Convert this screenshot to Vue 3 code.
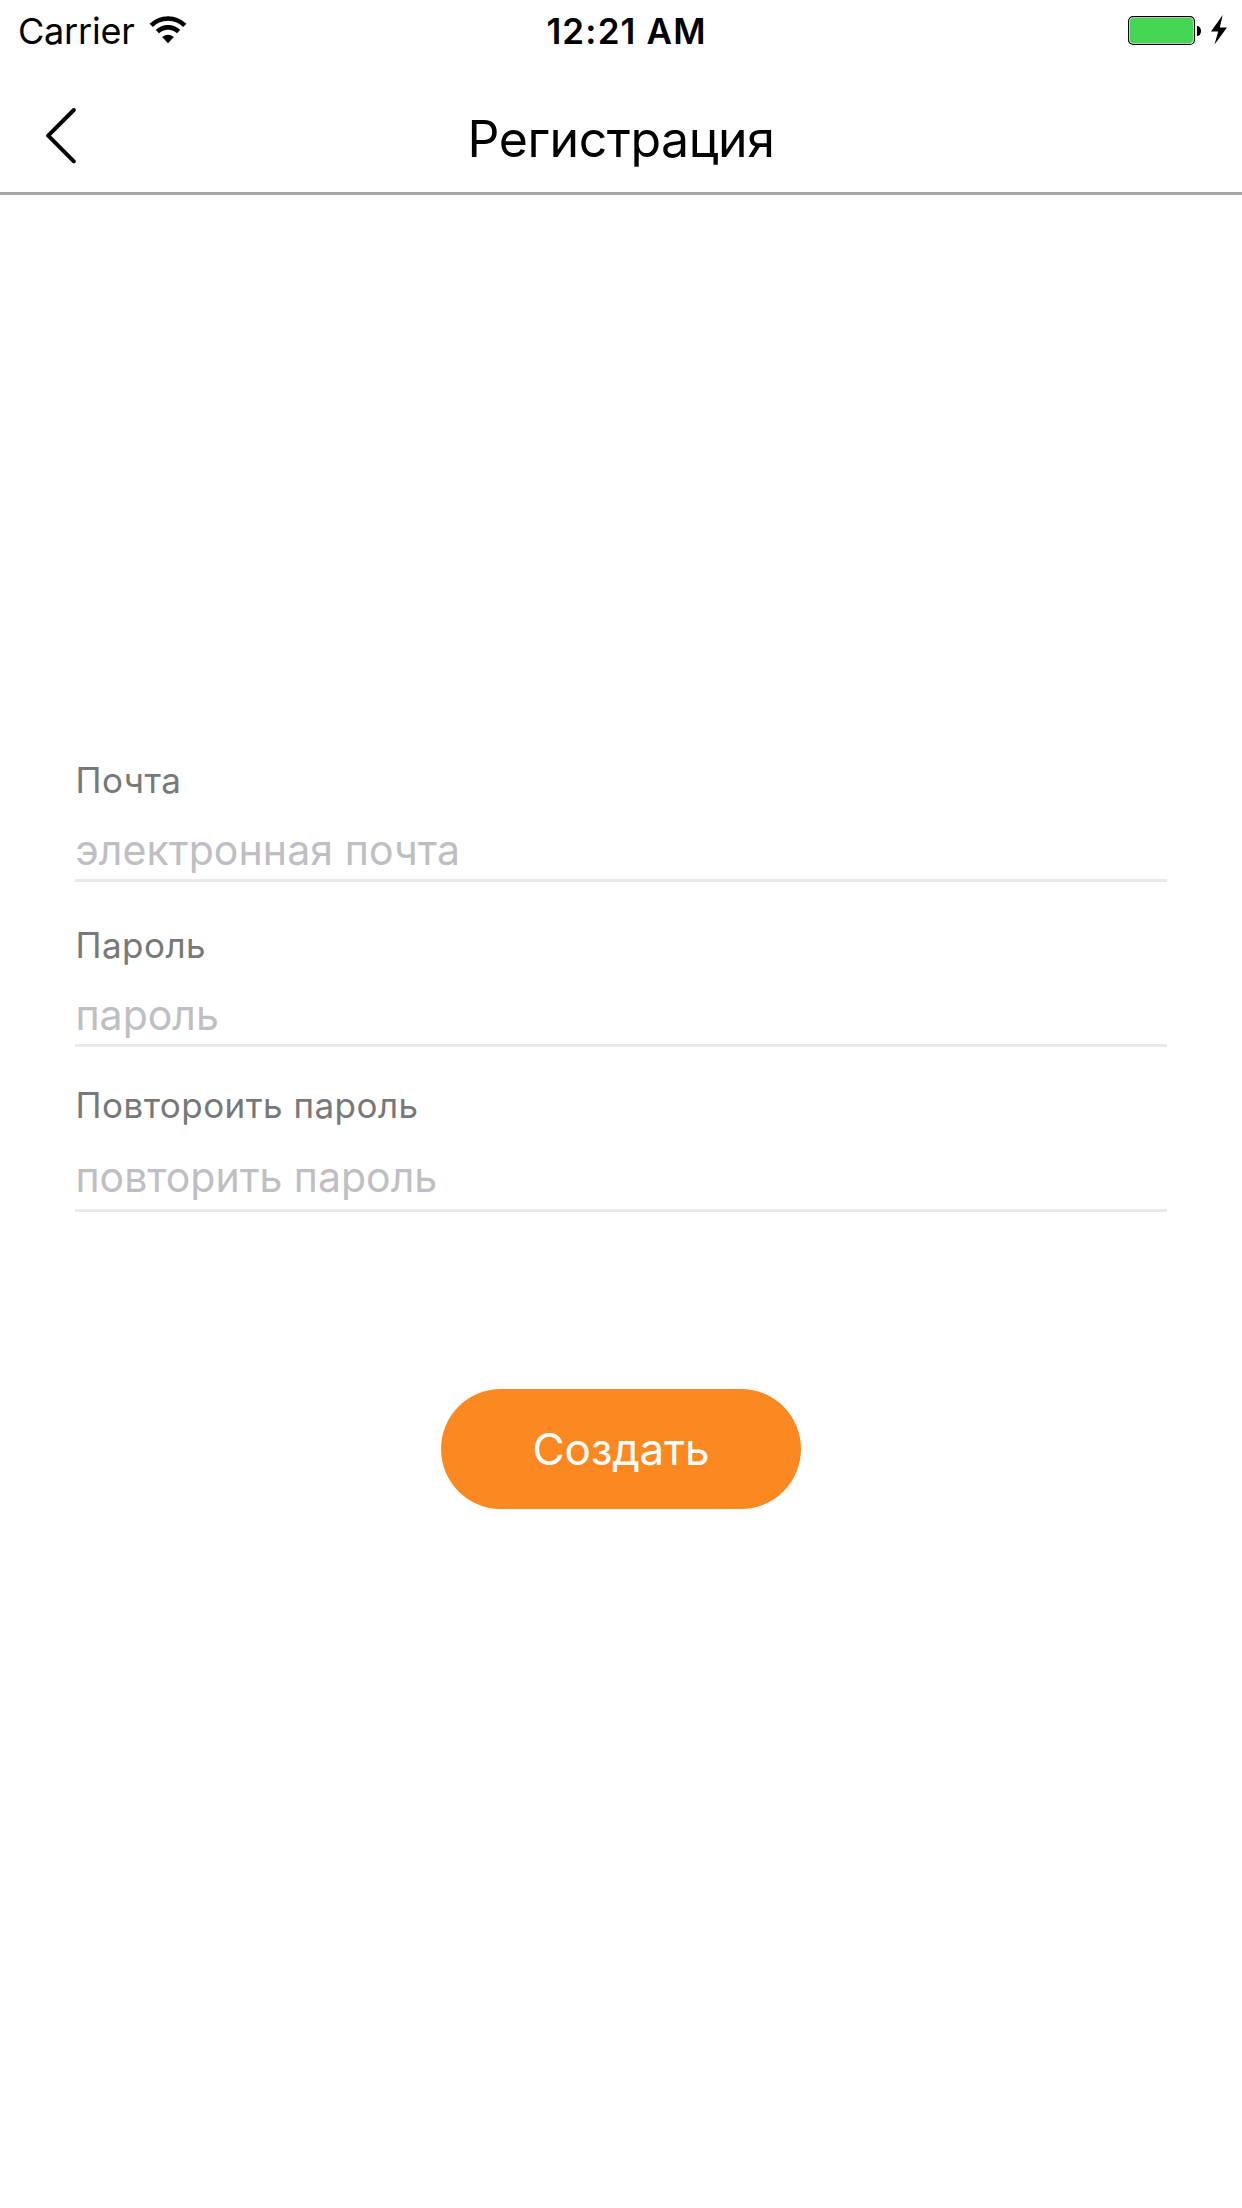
<script setup>
import { ref } from 'vue'

const fields = ref([
  { id: 'email', label: 'Почта', hint: 'электронная почта', type: 'email', value: '' },
  { id: 'password', label: 'Пароль', hint: 'пароль', type: 'password', value: '' },
  { id: 'repeat', label: 'Повтороить пароль', hint: 'повторить пароль', type: 'password', value: '' },
])
</script>

<template>
  <div class="screen">
    <div class="status">
      <div class="network">
        <span class="carrier">Carrier</span>
        <svg class="wifi" width="38" height="28" viewBox="0 0 38 28">
          <path d="M2.2 9.4A24 24 0 0 1 35.8 9.4" fill="none" stroke="#000" stroke-width="4.6" />
          <path d="M8.4 15.6A15.3 15.3 0 0 1 29.6 15.6" fill="none" stroke="#000" stroke-width="4.6" />
          <path d="M13.2 21.1Q19 16.2 24.8 21.1L19 27.2Z" />
        </svg>
      </div>
      <span class="time">12:21 AM</span>
      <svg class="battery" width="100" height="30" viewBox="0 0 100 30">
        <rect x="0.6" y="1.6" width="65.8" height="27.8" rx="4.5" fill="#fff" stroke="#000" stroke-width="1.2" />
        <rect x="2" y="3" width="63" height="25" rx="3" fill="#44d553" />
        <path d="M69 11C71.500 11 73 13 73 16S71.500 21 69 21Z" />
        <path d="M94.700 0L83 16.500H90.200L86.500 29.500L99 12.600H91.800Z" />
      </svg>
    </div>

    <header class="navbar">
      <button class="back" aria-label="Назад">
        <svg width="32" height="57" viewBox="0 0 32 57">
          <path d="M28.800 3L3.200 28.700L28.800 54.300" fill="none" stroke="#000" stroke-width="4" stroke-linecap="round" stroke-linejoin="round" />
        </svg>
      </button>
      <h1 class="title">Регистрация</h1>
    </header>

    <form class="form" @submit.prevent>
      <div v-for="f in fields" :key="f.id" class="field" :class="f.id">
        <label class="label" :for="f.id">{{ f.label }}</label>
        <input :id="f.id" v-model="f.value" class="input" :type="f.type" :placeholder="f.hint">
      </div>
      <button class="submit" type="submit">Создать</button>
    </form>
  </div>
</template>

<style>
body {
  background: #fff;
}
</style>

<style scoped>
.screen {
  box-sizing: border-box;
  width: 1242px;
  height: 2208px;
  overflow: hidden;
  background: #fff;
  color: #000;
  font-family: Inter, "Liberation Sans", sans-serif;
}

.status {
  display: grid;
  grid-template-columns: 1fr auto 1fr;
  align-items: start;
  height: 60px;
  padding: 0 14px 0 18px;
}

.network {
  display: flex;
}

.carrier,
.time {
  font-size: 36px;
  line-height: 62px;
}

.carrier {
  letter-spacing: -0.2px;
}

.wifi {
  margin: 16px 0 0 14px;
}

.time {
  margin-left: 7px;
  font-size: 35px;
  font-weight: 600;
  letter-spacing: 1.15px;
}

.battery {
  justify-self: end;
  margin-top: 15px;
}

.navbar {
  display: grid;
  grid-template-columns: 120px 1fr 120px;
  box-sizing: border-box;
  height: 135px;
  border-bottom: 3px solid #a6a6a6;
}

.back {
  display: flex;
  align-items: flex-start;
  padding: 47px 0 0 45px;
  border: 0;
  background: none;
}

.title {
  margin: 0;
  padding-top: 44px;
  font-size: 50px;
  font-weight: 400;
  line-height: 70px;
  letter-spacing: -0.45px;
  text-align: center;
}

.form {
  display: flex;
  flex-direction: column;
  padding: 522px 75px 0;
}

.field {
  display: flex;
  flex-direction: column;
  box-sizing: border-box;
  height: 165px;
  padding-top: 41px;
  border-bottom: 3px solid #e9e9e9;
}

.label {
  height: 44px;
  padding-left: 0.5px;
  color: #787878;
  font-size: 35px;
  line-height: 44px;
  letter-spacing: 0.46px;
}

.input {
  height: 56px;
  margin-top: 20px;
  padding: 0 0 0 0.5px;
  border: 0;
  outline: none;
  background: none;
  font: 400 41px/56px Inter, "Liberation Sans", sans-serif;
}

.email .input {
  letter-spacing: 0.1px;
}

.input::placeholder {
  color: #bebec4;
  opacity: 1;
}

.repeat {
  padding-top: 36px;
}

.repeat .input {
  margin-top: 22px;
}

.submit {
  align-self: center;
  width: 360px;
  height: 120px;
  margin-top: 177px;
  padding: 0;
  border: 0;
  border-radius: 60px;
  background: #fb8820;
  color: #fff;
  font: 400 44px/120px Inter, "Liberation Sans", sans-serif;
  letter-spacing: -0.2px;
}
</style>
